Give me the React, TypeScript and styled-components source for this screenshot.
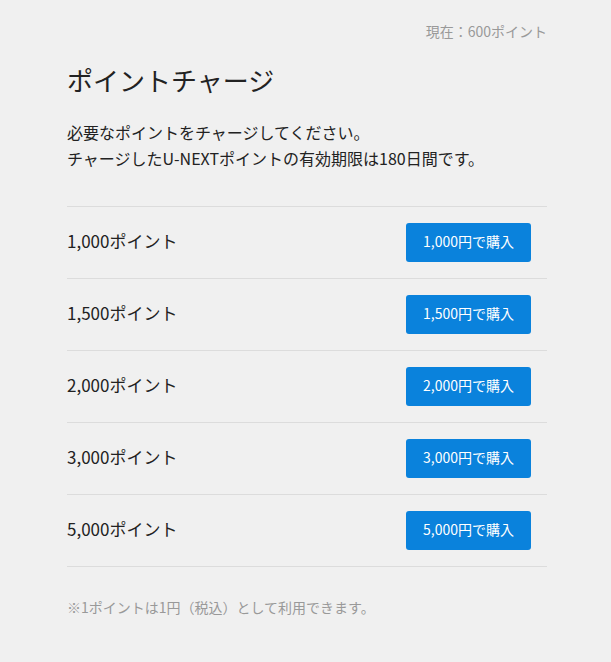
import React from 'react';
import styled, { createGlobalStyle } from 'styled-components';

const GlobalStyle = createGlobalStyle`
  html, body {
    margin: 0;
    padding: 0;
    background: #f0f0f0;
  }
  body {
    font-family: "Noto Sans CJK JP", "Noto Sans", sans-serif;
    color: #222;
  }
`;

const Wrapper = styled.div`
  min-height: 662px;
  padding: 20px 64px 0 67px;
  box-sizing: border-box;
`;

const Balance = styled.div`
  text-align: right;
  font-size: 14px;
  line-height: 22px;
  color: #999;
`;

const Title = styled.h1`
  margin: 22px 0 0;
  font-size: 26px;
  font-weight: 400;
  line-height: 32px;
  color: #222;
`;

const Lead = styled.p`
  margin: 23px 0 0;
  font-size: 16px;
  line-height: 26px;
  color: #222;
`;

const List = styled.ul`
  list-style: none;
  margin: 35px 0 0;
  padding: 0;
  border-top: 1px solid #dcdcdc;
`;

const Row = styled.li`
  display: flex;
  align-items: center;
  justify-content: space-between;
  height: 71px;
  padding-right: 16px;
  border-bottom: 1px solid #dcdcdc;
`;

const Amount = styled.span`
  font-size: 17px;
  line-height: 24px;
  margin-top: -3px;
  color: #222;
`;

const BuyButton = styled.button`
  width: 125px;
  height: 39px;
  padding: 0 0 4px;
  border: none;
  border-radius: 3px;
  background: #0a82dc;
  color: #fff;
  font-family: inherit;
  font-size: 14px;
  cursor: pointer;
`;

const Note = styled.p`
  margin: 30px 0 0;
  font-size: 14px;
  line-height: 20px;
  color: #999;
`;

const plans = ['1,000', '1,500', '2,000', '3,000', '5,000'];

const App = () => (
  <>
    <GlobalStyle />
    <Wrapper>
      <Balance>現在：600ポイント</Balance>
      <Title>ポイントチャージ</Title>
      <Lead>
        必要なポイントをチャージしてください。
        <br />
        チャージしたU-NEXTポイントの有効期限は180日間です。
      </Lead>
      <List>
        {plans.map(p => (
          <Row key={p}>
            <Amount>{p}ポイント</Amount>
            <BuyButton>{p}円で購入</BuyButton>
          </Row>
        ))}
      </List>
      <Note>※1ポイントは1円（税込）として利用できます。</Note>
    </Wrapper>
  </>
);

export default App;
